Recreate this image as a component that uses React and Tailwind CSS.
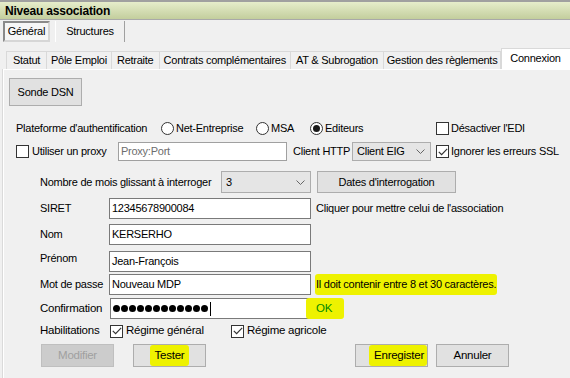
import React from 'react';

const Radio = ({ checked }) => (
  <span className="w-[13px] h-[13px] rounded-full border border-[#333] bg-white flex items-center justify-center shrink-0">
    {checked && <span className="w-[7px] h-[7px] rounded-full bg-[#1a1a1a]" />}
  </span>
);

const Check = ({ checked }) => (
  <span className="w-[13px] h-[13px] border border-[#333] bg-white flex items-center justify-center shrink-0">
    {checked && (
      <svg width="10" height="8" viewBox="0 0 10 8">
        <path d="M0.8 3.8 L3.6 6.6 L9.2 0.9" fill="none" stroke="#333" strokeWidth="1.2" />
      </svg>
    )}
  </span>
);

const Chevron = () => (
  <svg width="9" height="5" viewBox="0 0 9 5" className="shrink-0">
    <path d="M0.5 0.5 L4.5 4.5 L8.5 0.5" fill="none" stroke="#666" strokeWidth="1" />
  </svg>
);

const Input = ({ value, w = 'w-[202px]', children }) => (
  <div className={`${w} h-[21px] border border-[#7a7a7a] bg-white flex items-center px-[2px] shrink-0`}>
    {children || <span>{value}</span>}
  </div>
);

const innerTabs = [
  ['Statut', 'w-[42px]'],
  ['Pôle Emploi', 'w-[66px]'],
  ['Retraite', 'w-[49px]'],
  ['Contrats complémentaires', 'w-[134px]'],
  ['AT & Subrogation', 'w-[95px]'],
  ['Gestion des règlements', 'w-[120px]'],
];

export default function App() {
  return (
    <div className="w-[570px] h-[378px] bg-[#f0f0f0] overflow-hidden flex flex-col text-[11px] tracking-[-0.25px] text-black font-['Liberation_Sans',Arial,sans-serif] leading-none">
      {/* title bar */}
      <div className="h-[20px] border-t-2 border-b border-t-[#a0a0a0] border-b-[#a9a9a9] bg-gradient-to-b from-[#e6edcb] to-[#c3ce9d] flex items-center pl-[5px]">
        <span className="font-bold text-[12px] tracking-[-0.2px]">Niveau association</span>
      </div>

      {/* outer tabs */}
      <div className="mt-[1px] h-[21px] flex pl-[3px]">
        <div className="w-[47px] h-[21px] border-2 border-t-[#8a8a8a] border-l-[#8a8a8a] border-r-[#d6d6d6] border-b-[#d6d6d6] bg-[#f6f6f6] flex items-center justify-center">
          Général
        </div>
        <div className="ml-[5px] w-[70px] h-[21px] border-l border-r border-l-white border-r-[#a0a0a0] flex items-center justify-center">
          Structures
        </div>
      </div>

      {/* inner tabs */}
      <div className="mt-[6px] h-[21px] flex items-end pl-[6px]">
        {innerTabs.map(([t, w], i) => (
          <div
            key={t}
            className={`${w} h-[18px] border-t border-r border-[#d9d9d9] ${i === 0 ? 'border-l' : ''} bg-[#f0f0f0] flex items-center justify-center whitespace-nowrap`}
          >
            {t}
          </div>
        ))}
        <div className="w-[70px] h-[21px] border-t border-l border-[#d9d9d9] bg-white flex items-center pl-[8px] pb-[2px]">
          Connexion
        </div>
      </div>

      {/* panel */}
      <div className="ml-[3px] flex-1 border-t border-l border-white shadow-[-1px_0_0_#dadada] flex flex-col">
        <div className="mt-[8px] ml-[5px] w-[73px] h-[28px] border border-[#adadad] bg-[#e1e1e1] flex items-center justify-center">
          Sonde DSN
        </div>

        {/* plateforme */}
        <div className="mt-[14px] h-[16px] pl-[12px] flex items-center whitespace-nowrap">
          <span className="w-[145px]">Plateforme d'authentification</span>
          <span className="w-[95px] flex items-center gap-[2px]"><Radio />Net-Entreprise</span>
          <span className="w-[54px] flex items-center gap-[2px]"><Radio />MSA</span>
          <span className="w-[126px] flex items-center gap-[2px]"><Radio checked />Editeurs</span>
          <span className="flex items-center gap-[2px]"><Check />Désactiver l'EDI</span>
        </div>

        {/* proxy */}
        <div className="mt-[6px] h-[19px] pl-[12px] flex items-center whitespace-nowrap">
          <span className="w-[102px] flex items-center gap-[3px]"><Check />Utiliser un proxy</span>
          <div className="w-[169px] h-[19px] border border-[#a0a0a0] bg-white flex items-center px-[2px] text-[#6d6d6d]">Proxy:Port</div>
          <span className="ml-[6px] w-[59px]">Client HTTP</span>
          <div className="w-[79px] h-[19px] border border-[#adadad] bg-[#e5e5e5] flex items-center justify-between pl-[4px] pr-[5px]">
            <span>Client EIG</span>
            <Chevron />
          </div>
          <span className="ml-[5px] flex items-center gap-[2px]"><Check checked />Ignorer les erreurs SSL</span>
        </div>

        {/* nombre de mois */}
        <div className="mt-[10px] h-[22px] pl-[36px] flex items-center whitespace-nowrap">
          <span className="w-[181px]">Nombre de mois glissant à interroger</span>
          <div className="w-[90px] h-[22px] border border-[#adadad] bg-[#e5e5e5] flex items-center justify-between pl-[4px] pr-[5px]">
            <span>3</span>
            <Chevron />
          </div>
          <div className="ml-[6px] w-[139px] h-[22px] border border-[#adadad] bg-[#e1e1e1] flex items-center justify-center">
            Dates d'interrogation
          </div>
        </div>

        {/* siret */}
        <div className="mt-[5px] h-[21px] pl-[36px] flex items-center whitespace-nowrap">
          <span className="w-[69px]">SIRET</span>
          <Input value="12345678900084" />
          <span className="ml-[5px]">Cliquer pour mettre celui de l'association</span>
        </div>

        <div className="mt-[5px] h-[21px] pl-[36px] flex items-center whitespace-nowrap">
          <span className="w-[69px]">Nom</span>
          <Input value="KERSERHO" />
        </div>

        <div className="mt-[6px] h-[21px] pl-[36px] flex items-center whitespace-nowrap">
          <span className="w-[69px] -mt-[6px]">Prénom</span>
          <Input value="Jean-François" />
        </div>

        <div className="mt-[2px] h-[21px] pl-[36px] flex items-center whitespace-nowrap">
          <span className="w-[69px]">Mot de passe</span>
          <Input value="Nouveau MDP" />
          <span className="ml-[4px] bg-[#eef200] px-[1px] py-[5px] rounded-[3px]">Il doit contenir entre 8 et 30 caractères.</span>
        </div>

        <div className="mt-[3px] h-[21px] pl-[36px] flex items-center whitespace-nowrap">
          <span className="w-[70px] text-[11.5px]">Confirmation</span>
          <Input w="w-[201px]">
            <span className="flex items-center gap-[1px]">
              {Array.from({ length: 12 }).map((_, i) => (
                <span key={i} className="w-[7px] h-[7px] rounded-full bg-black" />
              ))}
              <span className="ml-[1px] w-[1px] h-[14px] bg-black" />
            </span>
          </Input>
          <span className="-ml-[5px] w-[38px] h-[21px] bg-[#eef200] rounded-[3px] flex items-center pl-[10px] text-[#008a00] text-[11.5px]">OK</span>
        </div>

        {/* habilitations */}
        <div className="mt-[5px] h-[14px] pl-[36px] flex items-center whitespace-nowrap text-[11.5px]">
          <span className="w-[70px]">Habilitations</span>
          <span className="w-[121px] flex items-center gap-[3px]"><Check checked />Régime général</span>
          <span className="flex items-center gap-[3px]"><Check checked />Régime agricole</span>
        </div>

        {/* buttons */}
        <div className="mt-[6px] h-[23px] pl-[37px] flex items-center whitespace-nowrap text-[11.5px]">
          <div className="w-[73px] h-[23px] border border-[#bfbfbf] bg-[#cccccc] text-[#a0a0a0] flex items-center justify-center">Modifier</div>
          <div className="ml-[19px] w-[73px] h-[23px] border border-[#adadad] bg-[#e1e1e1] flex items-center justify-center">
            <span className="bg-[#eef200] px-[5px] py-[5px] rounded-[3px]">Tester</span>
          </div>
          <div className="ml-[149px] w-[73px] h-[23px] border border-[#adadad] bg-[#e1e1e1] flex items-center justify-end">
            <span className="bg-[#eef200] pl-[5px] pr-[3px] py-[5px] rounded-[3px]">Enregister</span>
          </div>
          <div className="ml-[8px] w-[73px] h-[23px] border border-[#adadad] bg-[#e1e1e1] flex items-center justify-center">Annuler</div>
        </div>
      </div>
    </div>
  );
}
